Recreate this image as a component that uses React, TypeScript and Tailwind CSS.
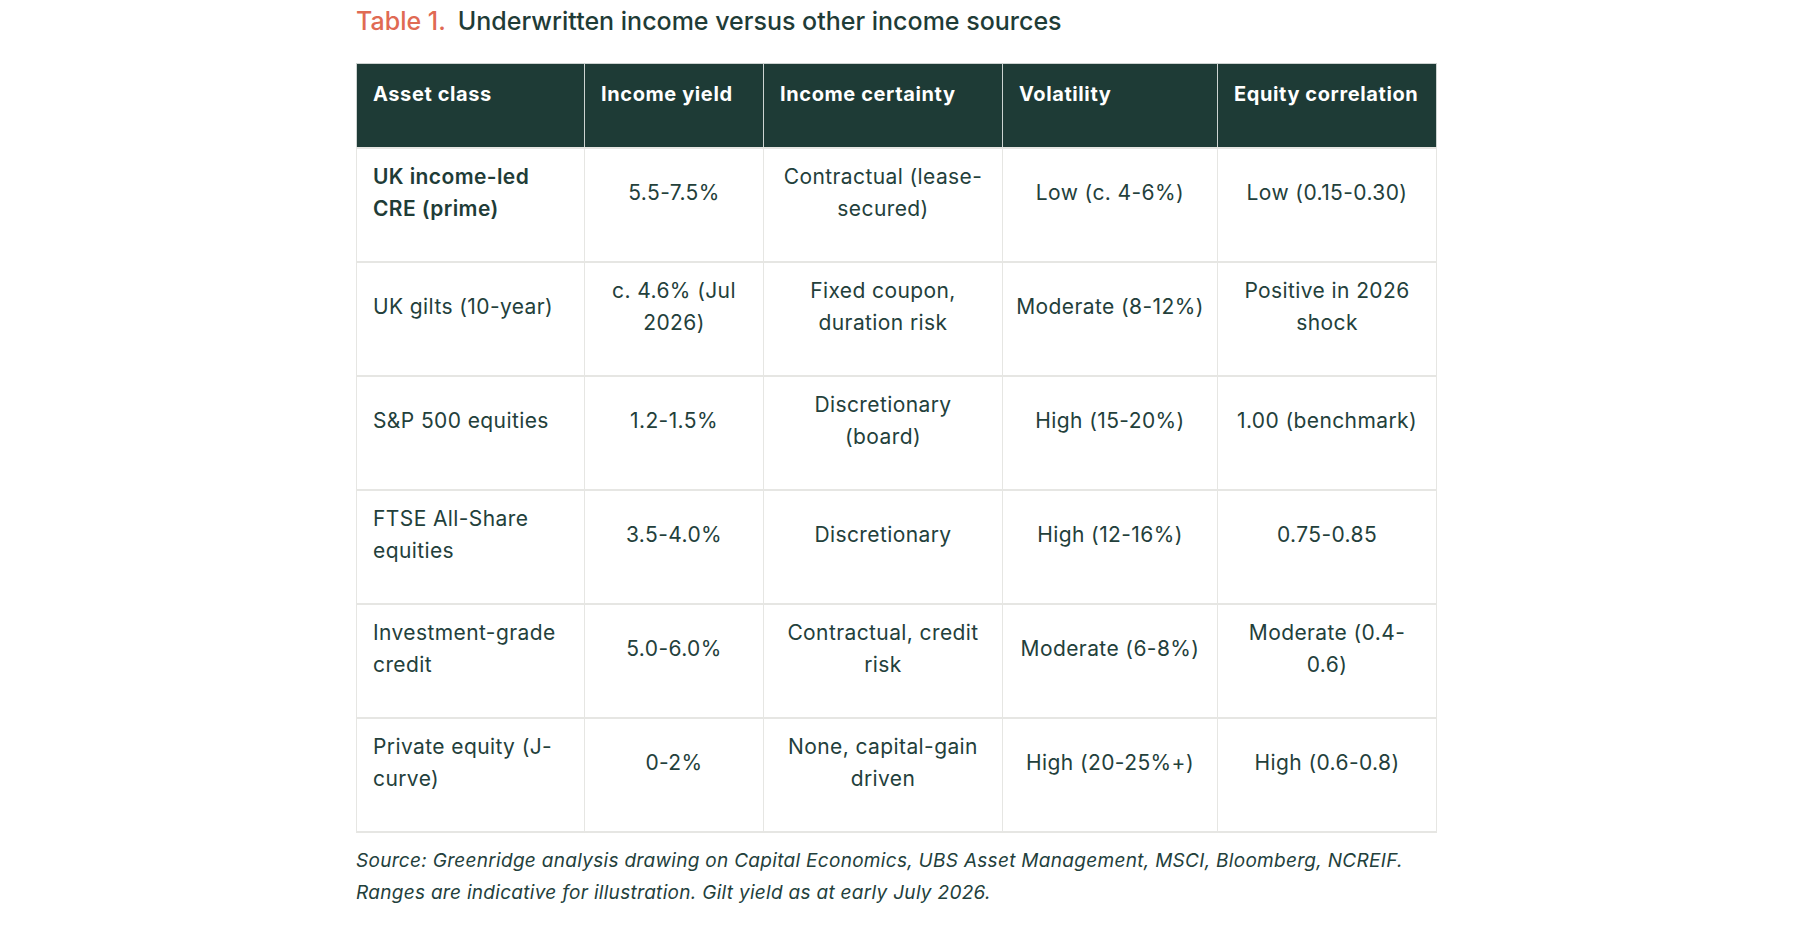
import React from 'react';

type Row = {
  asset: string[];
  yieldRange: string[];
  certainty: string[];
  volatility: string[];
  correlation: string[];
  strong?: boolean;
};

const rows: Row[] = [
  {
    asset: ['UK income-led', 'CRE (prime)'],
    yieldRange: ['5.5-7.5%'],
    certainty: ['Contractual (lease-', 'secured)'],
    volatility: ['Low (c. 4-6%)'],
    correlation: ['Low (0.15-0.30)'],
    strong: true,
  },
  {
    asset: ['UK gilts (10-year)'],
    yieldRange: ['c. 4.6% (Jul', '2026)'],
    certainty: ['Fixed coupon,', 'duration risk'],
    volatility: ['Moderate (8-12%)'],
    correlation: ['Positive in 2026', 'shock'],
  },
  {
    asset: ['S&P 500 equities'],
    yieldRange: ['1.2-1.5%'],
    certainty: ['Discretionary', '(board)'],
    volatility: ['High (15-20%)'],
    correlation: ['1.00 (benchmark)'],
  },
  {
    asset: ['FTSE All-Share', 'equities'],
    yieldRange: ['3.5-4.0%'],
    certainty: ['Discretionary'],
    volatility: ['High (12-16%)'],
    correlation: ['0.75-0.85'],
  },
  {
    asset: ['Investment-grade', 'credit'],
    yieldRange: ['5.0-6.0%'],
    certainty: ['Contractual, credit', 'risk'],
    volatility: ['Moderate (6-8%)'],
    correlation: ['Moderate (0.4-', '0.6)'],
  },
  {
    asset: ['Private equity (J-', 'curve)'],
    yieldRange: ['0-2%'],
    certainty: ['None, capital-gain', 'driven'],
    volatility: ['High (20-25%+)'],
    correlation: ['High (0.6-0.8)'],
  },
];

const headers = ['Asset class', 'Income yield', 'Income certainty', 'Volatility', 'Equity correlation'];

// keeps the reference's line breaks regardless of font metrics
const Lines = ({ lines }: { lines: string[] }) => (
  <>
    {lines.map((l) => (
      <span key={l} className="block whitespace-nowrap">
        {l}
      </span>
    ))}
  </>
);

export default function App() {
  return (
    <div className="min-h-[930px] w-full bg-white font-['Inter','Liberation_Sans',sans-serif] text-[#23403b]">
      <div className="ml-[356px] w-[1080px] pt-[5px]">
        <h2 className="text-[25px] leading-[32px] font-medium">
          <span className="text-[#e06a53]">Table 1.</span>
          <span className="ml-[12px] text-[#1f3c37]">Underwritten income versus other income sources</span>
        </h2>

        <table className="mt-[26px] w-[1080px] table-fixed border-collapse">
          <colgroup>
            <col className="w-[228px]" />
            <col className="w-[179px]" />
            <col className="w-[239px]" />
            <col className="w-[215px]" />
            <col className="w-[219px]" />
          </colgroup>
          <thead>
            <tr className="h-[84px] bg-[#1e3b36]">
              {headers.map((h) => (
                <th
                  key={h}
                  className="border border-[#cdd3d1] px-4 pt-[14px] text-left align-top text-[20px] leading-[32px] font-bold tracking-[0.6px] text-white"
                >
                  {h}
                </th>
              ))}
            </tr>
          </thead>
          <tbody>
            {rows.map((r) => (
              <tr key={r.asset.join(' ')} className="h-[113px]">
                <td
                  className={
                    'border-x border-y-2 border-[#e6e6e3] px-4 pt-[12px] pb-[36px] align-middle text-[21px] leading-[32px] tracking-[0.4px] ' +
                    (r.strong ? 'font-semibold text-[#1f3c37]' : 'font-normal')
                  }
                >
                  <Lines lines={r.asset} />
                </td>
                {[r.yieldRange, r.certainty, r.volatility, r.correlation].map((c, i) => (
                  <td
                    key={i}
                    className="border-x border-y-2 border-[#e6e6e3] px-2 pt-[12px] pb-[36px] text-center align-middle text-[21px] leading-[32px] tracking-[0.4px]"
                  >
                    <Lines lines={c} />
                  </td>
                ))}
              </tr>
            ))}
          </tbody>
        </table>

        <div className="mt-[12px] text-[19px] leading-[32px] italic tracking-[0.3px] text-[#23403b]">
          <p>Source: Greenridge analysis drawing on Capital Economics, UBS Asset Management, MSCI, Bloomberg, NCREIF.</p>
          <p>Ranges are indicative for illustration. Gilt yield as at early July 2026.</p>
        </div>
      </div>
    </div>
  );
}
